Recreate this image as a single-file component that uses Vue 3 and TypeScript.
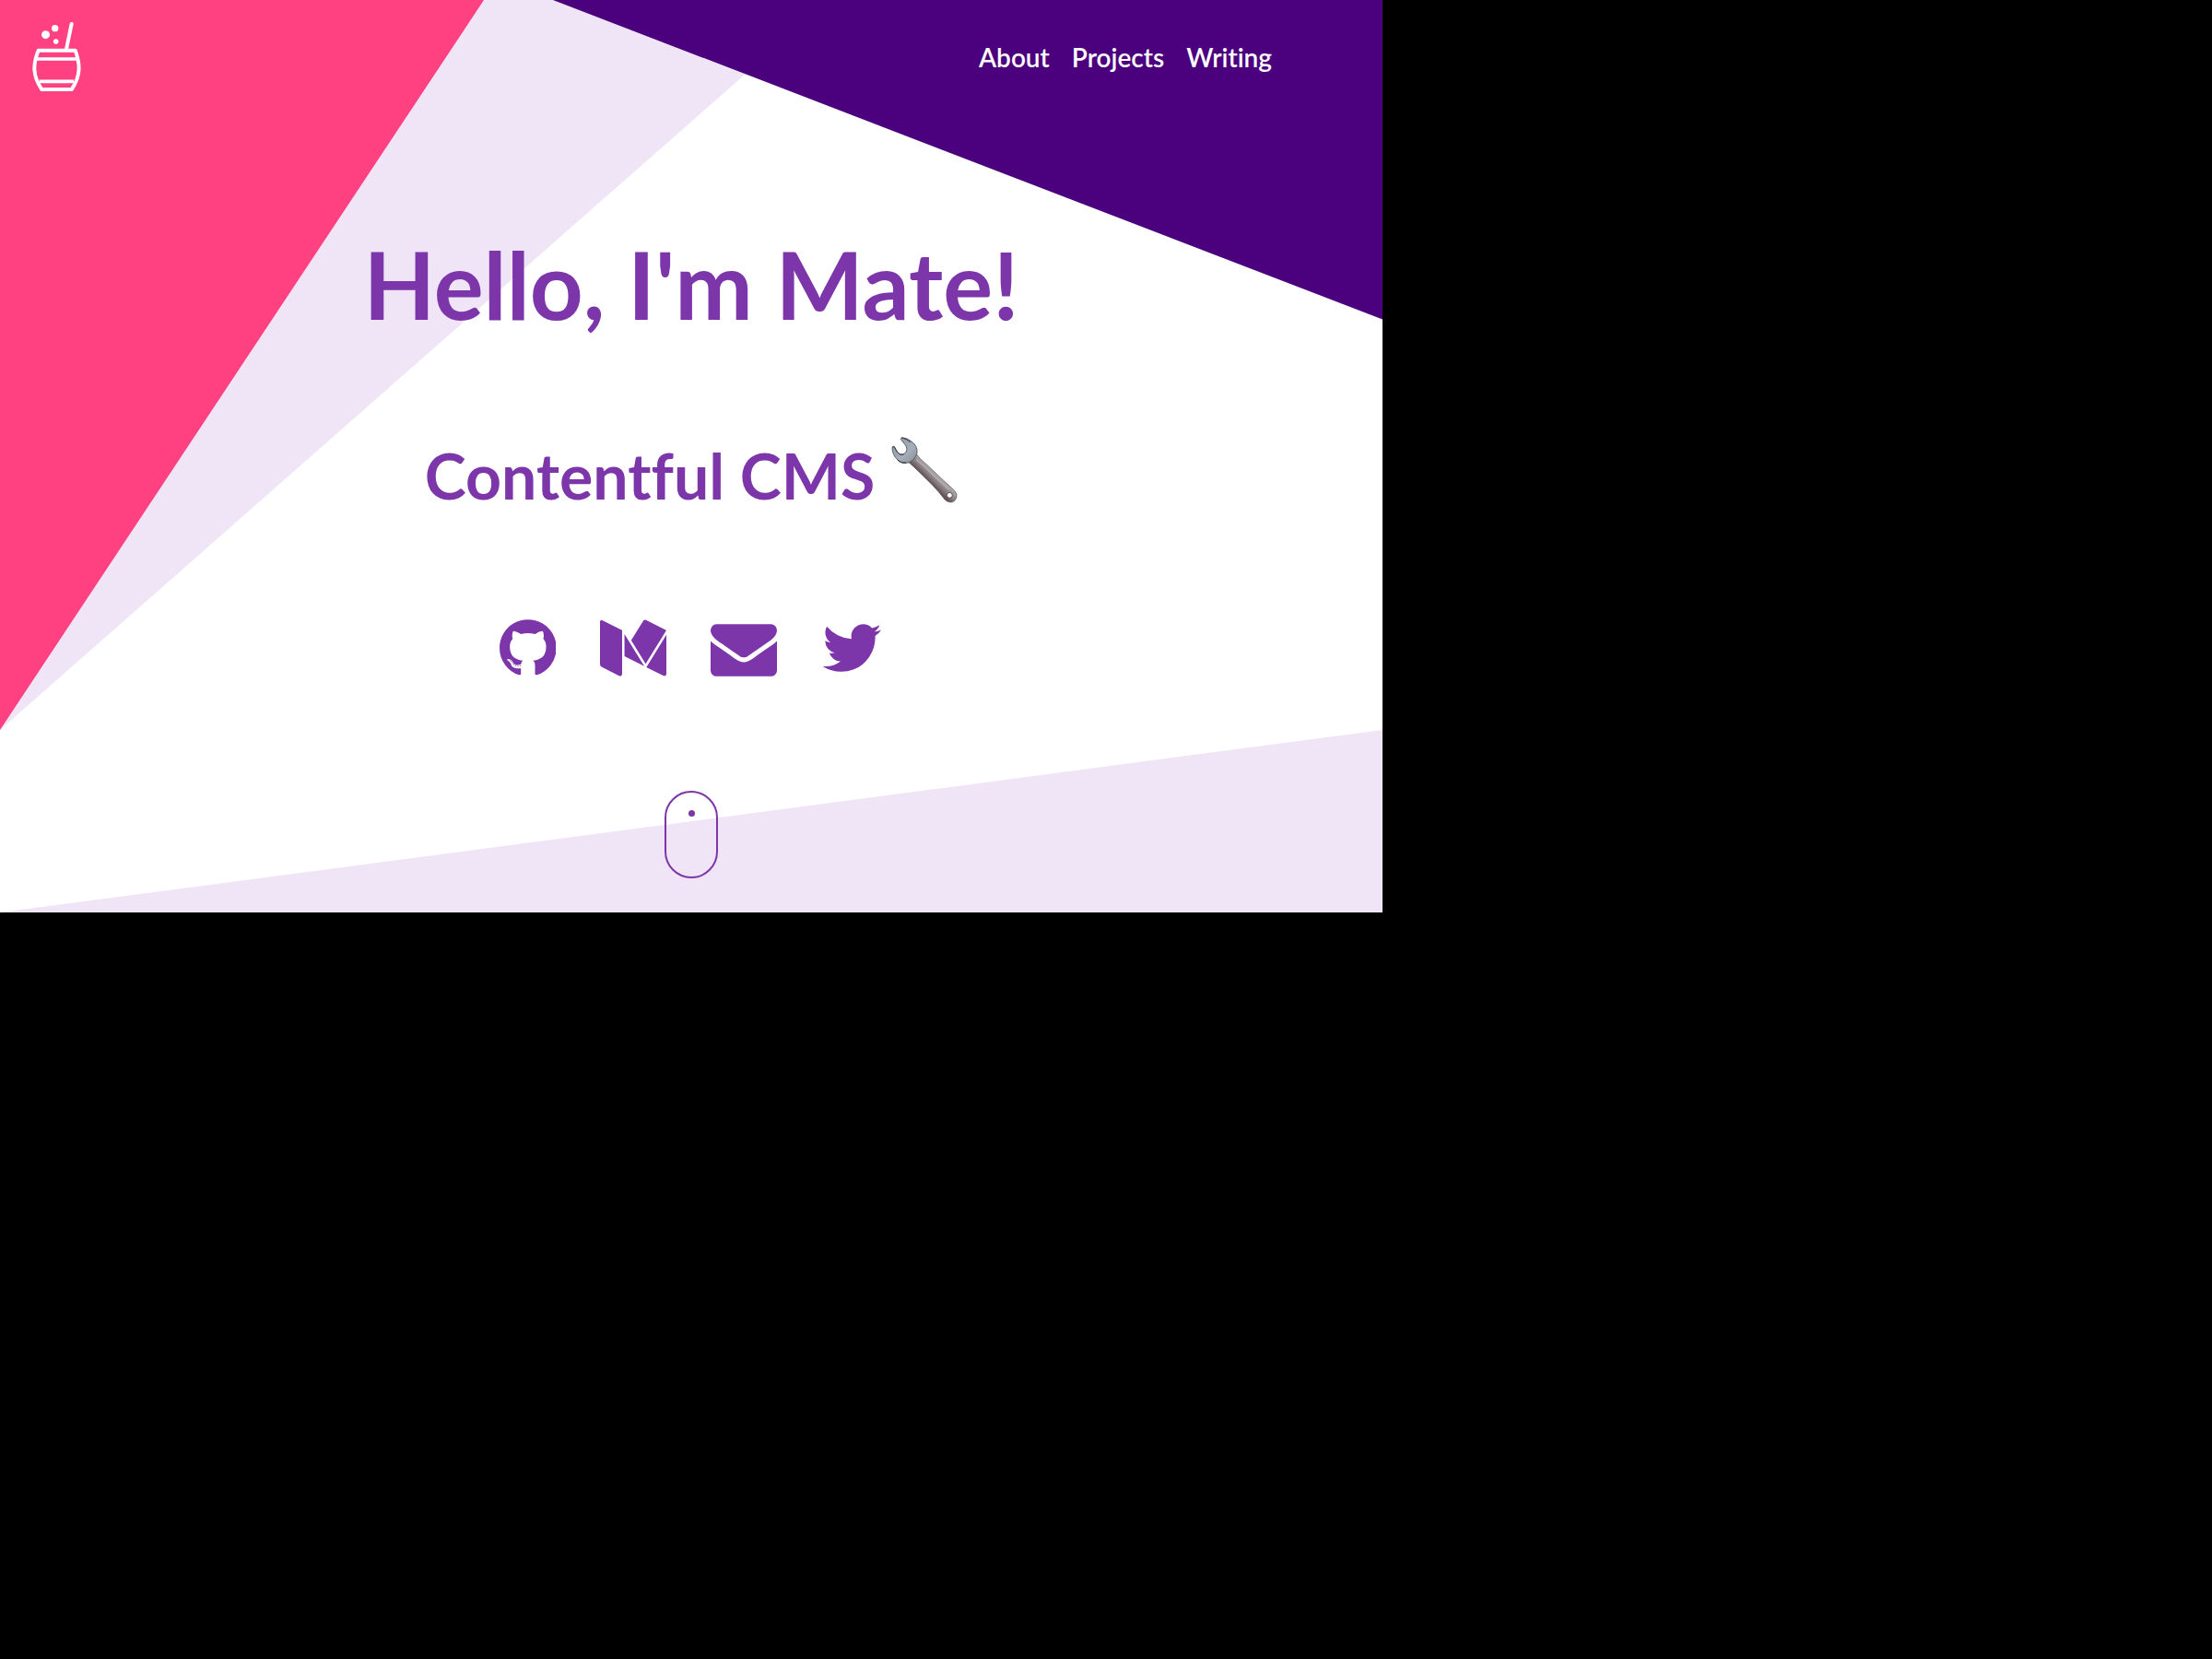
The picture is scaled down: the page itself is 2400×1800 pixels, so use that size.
<script setup lang="ts">
interface NavLink {
  label: string
  href: string
}

interface SocialLink {
  name: string
  href: string
  viewBox: string
  path: string
}

const navLinks: NavLink[] = [
  { label: 'About', href: '#about' },
  { label: 'Projects', href: '#projects' },
  { label: 'Writing', href: '#writing' },
]

const socialLinks: SocialLink[] = [
  {
    name: 'GitHub',
    href: '#github',
    viewBox: '128 0 1536 1792',
    path: 'M896 128q209 0 385.5 103t279.5 279.5 103 385.5q0 251-146.5 451.5t-378.5 277.5q-27 5-40-7t-13-30q0-3 .5-76.5t.5-134.5q0-97-52-142 57-6 102.5-18t94-39 81-66.5 53-105 20.5-150.5q0-119-79-206 37-91-8-204-28-9-81 11t-92 44l-38 24q-93-26-192-26t-192 26q-16-11-42.5-27t-83.5-38.5-85-13.5q-45 113-8 204-79 87-79 206 0 85 20.5 150t52.5 105 80.5 67 94 39 102.5 18q-39 36-49 103-21 10-45 15t-57 5-65.5-21.5-55.5-62.5q-19-32-48.5-52t-49.5-24l-20-3q-21 0-29 4.5t-5 11.5 9 14 13 12l7 5q22 10 43.5 38t31.5 51l10 23q13 38 44 61.5t67 30 69.5 7 55.5-3.5l23-4q0 38 .5 88.5t.5 54.5q0 18-13 30t-40 7q-232-77-378.5-277.5t-146.5-451.5q0-209 103-385.5t279.5-279.5 385.5-103zm-477 1103q3-7-7-12-10-3-13 2-3 7 7 12 9 6 13-2zm31 34q7-5-2-16-10-9-16-3-7 5 2 16 10 10 16 3zm30 45q9-7 0-19-8-13-17-6-9 5 0 18t17 7zm42 42q8-8-4-19-12-12-20-3-9 8 4 19 12 12 20 3zm57 25q3-11-13-16-15-4-19 7t13 15q15 6 19-6zm63 5q0-13-17-11-16 0-16 11 0 13 17 11 16 0 16-11zm58-10q-2-11-18-9-16 3-14 15t18 8 14-14z',
  },
  {
    name: 'Medium',
    href: '#medium',
    viewBox: '0 0 1792 1792',
    path: 'M597 421v1173q0 25-12.5 42.5t-36.5 17.5q-17 0-33-8l-465-233q-21-10-35.5-33.5t-14.5-46.5v-1140q0-20 10-34t29-14q14 0 44 15l511 256q3 3 3 5zM661 522l534 866-534-266v-600zM1792 540v1054q0 25-14 40.5t-38 15.5-47-13l-441-220zM1789 420q0 3-256.5 419.5t-300.5 487.5l-390-634 324-527q17-28 52-28 14 0 26 6l541 270q4 2 4 6z',
  },
  {
    name: 'Email',
    href: '#email',
    viewBox: '0 0 1792 1792',
    path: 'M1792 710v794q0 66-47 113t-113 47h-1472q-66 0-113-47t-47-113v-794q44 49 101 87 362 246 497 345 57 42 92.5 65.5t94.5 48 110 24.5h2q51 0 110-24.5t94.5-48 92.5-65.5q170-123 498-345 57-39 100-87zm0-294q0 79-49 151t-122 123q-376 261-468 325-10 7-42.5 31t-54 38.5-52 32.5-57.5 27-50 9h-2q-23 0-50-9t-57.5-27-52-32.5-54-38.5-42.5-31q-91-64-262-182.5t-205-142.5q-62-42-117-115.5t-55-136.5q0-78 41.5-130t118.5-52h1472q65 0 112.5 47t47.5 113z',
  },
  {
    name: 'Twitter',
    href: '#twitter',
    viewBox: '64 0 1664 1792',
    path: 'M1684 408q-67 98-162 167 1 14 1 42 0 130-38 259.5t-115.5 248.5-184.5 210.5-258 146-323 54.5q-271 0-496-145 35 4 78 4 225 0 401-138-105-2-188-64.5t-114-159.5q33 5 61 5 43 0 85-11-112-23-185.5-111.5t-73.5-205.5v-4q68 38 146 41-66-44-105-115t-39-154q0-88 44-163 121 149 294.5 238.5t371.5 99.5q-8-38-8-74 0-134 94.5-228.5t228.5-94.5q140 0 236 102 109-21 205-78-37 115-142 178 93-10 186-50z',
  },
]
</script>

<template>
  <main class="hero">
    <svg class="backdrop" viewBox="0 0 100 100" preserveAspectRatio="none" aria-hidden="true">
      <polygon class="lavender" points="0,0 60,0 0,80" />
      <polygon class="pink" points="0,0 35,0 0,80" />
      <polygon class="indigo" points="40,0 100,0 100,35" />
      <polygon class="lavender" points="0,100 100,80 100,100" />
    </svg>

    <header class="header">
      <a class="logo" href="#home" aria-label="Home">
        <svg viewBox="102 72 162 228" aria-hidden="true">
          <g fill="#fff">
            <circle cx="148.500" cy="113" r="13.500" />
            <circle cx="179" cy="92" r="11" />
            <circle cx="182" cy="135" r="8.500" />
          </g>
          <g fill="none" stroke="#fff" stroke-width="12" stroke-linejoin="round" stroke-linecap="round">
            <path d="M233 78L216 160" />
            <path d="M125 164H245C261 208 264 246 233 291H136C105 246 107 208 125 164Z" />
            <path d="M120 192H250M128 265H240" stroke-width="11" stroke-linecap="butt" />
          </g>
        </svg>
      </a>
      <nav class="nav" aria-label="Main">
        <a v-for="link in navLinks" :key="link.label" :href="link.href">{{ link.label }}</a>
      </nav>
    </header>

    <h1 class="title">Hello, I'm Mate!</h1>

    <h2 class="subtitle">
      <span>Contentful CMS</span>
      <svg class="wrench" viewBox="0 0 216 216" aria-hidden="true">
        <defs>
          <linearGradient id="handle" x1="0" y1="1" x2="1" y2="0">
            <stop offset="0.400" stop-color="#4e4347" />
            <stop offset="0.490" stop-color="#857a7e" />
            <stop offset="0.580" stop-color="#aca6ab" />
          </linearGradient>
          <linearGradient id="jaw" x1="0" y1="0" x2="1" y2="1">
            <stop offset="0" stop-color="#8d98a3" />
            <stop offset="0.600" stop-color="#a5afb9" />
            <stop offset="1" stop-color="#858990" />
          </linearGradient>
        </defs>
        <path
          d="M58 84L84 58Q92 71 109 84L144 117Q163 136 186 156L206 175Q217 187 212 199Q206 213 193 213Q183 213 175 205L153 178Q133 155 114 137L80 104Q71 95 58 84Z"
          fill="url(#handle)" stroke="#5f5558" stroke-width="2" />
        <path d="M82 74L113 101Q150 138 187 171" fill="none" stroke="#c5bfc3" stroke-width="5" opacity="0.600" />
        <path
          d="M34 2Q51 3 66 15Q86 29 84 52Q81 65 71 75Q59 86 41 86Q25 83 17 71Q4 58 3 34L8 31L19 50Q27 61 39 57Q51 51 51 40Q50 32 45 25L31 8Z"
          fill="url(#jaw)" stroke="#59606a" stroke-width="3" stroke-linejoin="round" />
        <path d="M34 3Q51 6 62 17M4 33L10 32L21 51Q29 61 41 57M20 75Q33 87 48 84" fill="none" stroke="#3c3438" stroke-width="3" />
        <circle cx="190" cy="190" r="9" fill="#fff" stroke="#51474b" stroke-width="3" />
      </svg>
    </h2>

    <ul class="socials">
      <li v-for="item in socialLinks" :key="item.name">
        <a :href="item.href" :aria-label="item.name">
          <svg :viewBox="item.viewBox" aria-hidden="true"><path :d="item.path" /></svg>
        </a>
      </li>
    </ul>

    <a class="scroll" href="#about" aria-label="Scroll down"><span class="wheel"></span></a>
  </main>
</template>

<style>
body {
  margin: 0;
  background: #000;
}
</style>

<style scoped>
.hero {
  position: relative;
  box-sizing: border-box;
  display: flex;
  flex-direction: column;
  align-items: center;
  width: 62.5vw;
  min-height: 55vh;
  background: #fff;
  color: #7c36aa;
  font-family: Lato, "Open Sans", sans-serif;
  font-variant-ligatures: none;
}

.backdrop {
  position: absolute;
  inset: 0;
  width: 100%;
  height: 100%;
}

.pink {
  fill: #ff4081;
}

.lavender {
  fill: #f0e5f6;
}

.indigo {
  fill: #4b007d;
}

.header,
.title,
.subtitle,
.socials,
.scroll {
  position: relative;
}

.header {
  align-self: stretch;
  display: flex;
  align-items: center;
  justify-content: space-between;
  padding: 24px 120px 24px 34px;
}

.logo svg {
  display: block;
  width: 54px;
  height: 76px;
}

.nav {
  display: flex;
  gap: 24px;
}

.nav a {
  color: #fff;
  font-size: 28px;
  line-height: 40px;
  font-weight: 600;
  text-decoration: none;
}

.title {
  margin: 116px 0 0;
  font-size: 101px;
  line-height: 136px;
  font-weight: 700;
}

.subtitle {
  display: flex;
  align-items: flex-start;
  gap: 18px;
  margin: 96px 0 0;
  font-size: 68px;
  line-height: 88px;
  font-weight: 700;
}

.wrench {
  width: 72px;
  height: 72px;
  margin-top: 2px;
}

.socials {
  display: flex;
  gap: 48px;
  margin: 107px 0 0;
  padding: 0;
  list-style: none;
}

.socials a {
  color: inherit;
}

.socials svg {
  display: block;
  height: 72px;
  fill: currentColor;
}

.scroll {
  box-sizing: border-box;
  display: flex;
  justify-content: center;
  width: 58px;
  height: 95px;
  margin: 119px 0 37px;
  padding-top: 19px;
  border: 2px solid #7c36aa;
  border-radius: 29px;
}

.wheel {
  width: 7px;
  height: 7px;
  border-radius: 50%;
  background: #7c36aa;
}
</style>
